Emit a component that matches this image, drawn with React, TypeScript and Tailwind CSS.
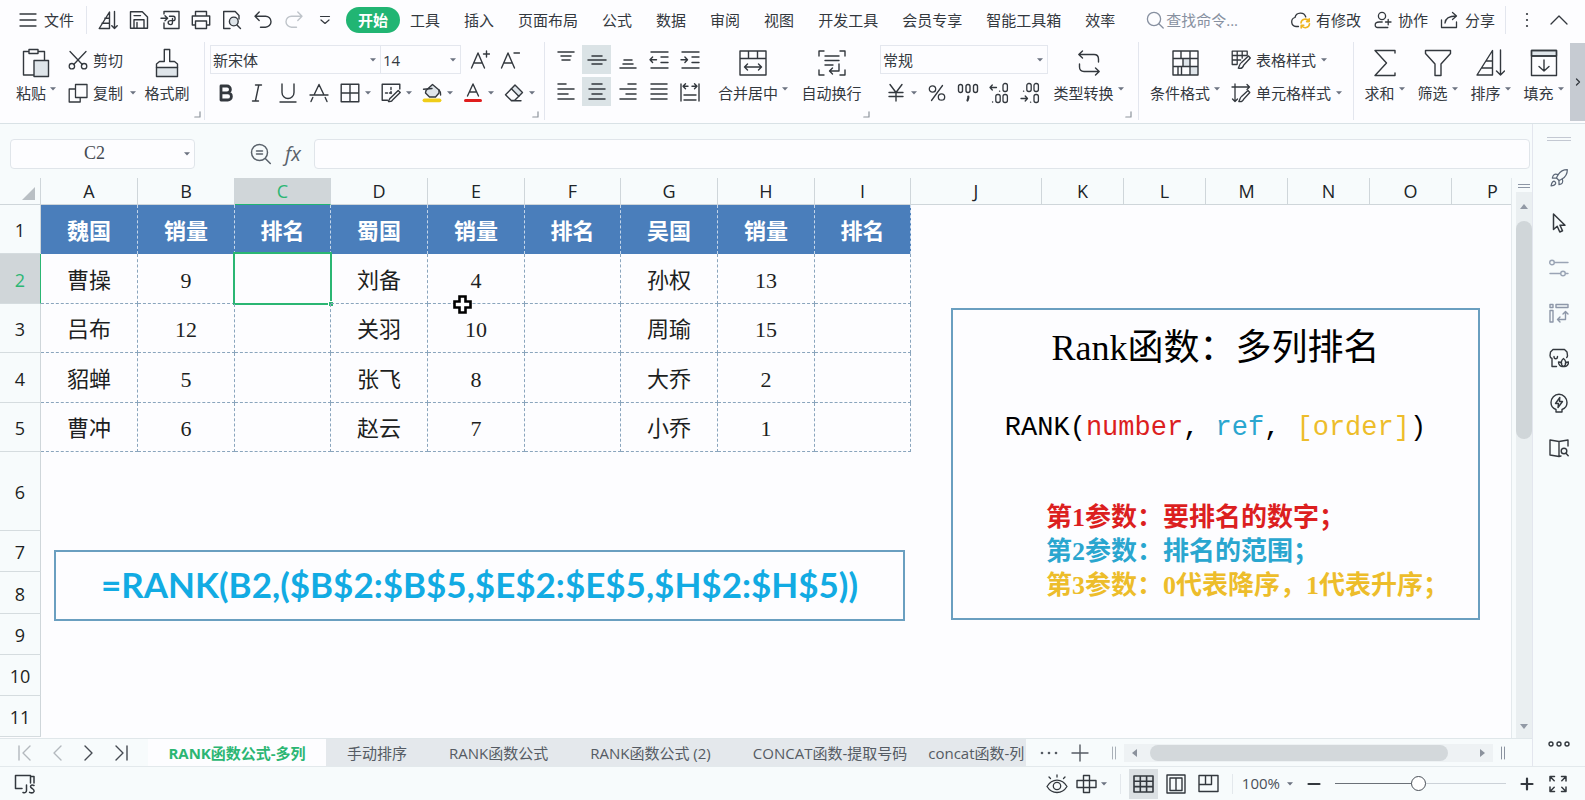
import type { ReactNode } from "react";
import { Rocket } from "lucide-react";

/* ---------- icon helpers ---------- */

function Ic({ w = 20, h = 20, sw = 1.4, cls = "", children }: { w?: number; h?: number; sw?: number; cls?: string; children: ReactNode }) {
  return (
    <svg
      width={w}
      height={h}
      viewBox={`0 0 ${w} ${h}`}
      fill="none"
      stroke="currentColor"
      strokeWidth={sw}
      strokeLinecap="round"
      strokeLinejoin="round"
      aria-hidden="true"
      className={`shrink-0 ${cls}`}
    >
      {children}
    </svg>
  );
}

function Caret({ cls = "" }: { cls?: string }) {
  return (
    <svg width="6" height="4" viewBox="0 0 6 4" aria-hidden="true" className={`shrink-0 text-[#6b7280] ${cls}`}>
      <path d="M0 0.2h6L3 3.6z" fill="currentColor" />
    </svg>
  );
}

const Lines = ({ w = 20, h = 20, rows }: { w?: number; h?: number; rows: [number, number, number][] }) => (
  <Ic w={w} h={h} sw={1.5}>
    {rows.map(([x1, x2, y]) => (
      <path key={`${x1}-${y}`} d={`M${x1} ${y}H${x2}`} />
    ))}
  </Ic>
);

const SortMini = () => (
  <Ic>
    <path d="M11.5 2v16.5H1.2zM4 13.3h7.5M6.8 8.3h4.7M16.5 1.5v17M13.8 15.8l2.7 2.7 2.7-2.7" />
  </Ic>
);
const SaveIcon = () => (
  <Ic>
    <path d="M1.5 1.8h11.8l5.2 5.2v11.2h-17zM5 18V9.8h10V18M5 5.6h6.5M8 12.5v5" />
  </Ic>
);
const ExportIcon = () => (
  <Ic>
    <path d="M4 4V1.5h15v17H4V13M1 8.3h6.5M5 5.8l2.6 2.5L5 10.8M9.5 6.2h3.8c2.4 0 2.4 4.4 0 4.4h-2.6c-3.4 0-3.4 4 0 4 2 0 1.8-2 1.8-4V8.5" />
  </Ic>
);
const PrintIcon = () => (
  <Ic>
    <path d="M4.5 6V1.5h11V6M4.5 15H1.3V6h17.4v9h-3.2M4.5 11h11v7.5h-11z" />
  </Ic>
);
const PreviewIcon = () => (
  <Ic>
    <path d="M8 18.5H1.7v-17h11.5L17 5.4V9" />
    <circle cx="11.8" cy="11.5" r="4.4" fill="#dfe5ea" />
    <path d="M15 15l3.5 3.6" />
  </Ic>
);
const UndoIcon = () => (
  <Ic>
    <path d="M6.2 2L2 6.2l4.2 4.2M2 6.2h10.5a5.4 5.4 0 0 1 0 11H7.5" />
  </Ic>
);
const RedoIcon = () => (
  <Ic>
    <path d="M13.8 2L18 6.2l-4.2 4.2M18 6.2H7.5a5.4 5.4 0 0 0 0 11h5" />
  </Ic>
);

/* ---------- top menu ---------- */

const menus = ["工具", "插入", "页面布局", "公式", "数据", "审阅", "视图", "开发工具", "会员专享", "智能工具箱", "效率"];

function MenuBar() {
  const quick: [string, ReactNode][] = [
    ["排序", <SortMini />],
    ["保存", <SaveIcon />],
    ["输出", <ExportIcon />],
    ["打印", <PrintIcon />],
    ["打印预览", <PreviewIcon />],
    ["撤销", <UndoIcon />],
  ];
  return (
    <nav className="flex h-10 items-center whitespace-nowrap text-[15px] leading-5">
      <button className="ml-[19px] flex items-center gap-[7px]">
        <Ic w={18} h={16} sw={1.3}>
          <path d="M1 2h16M1 8h16M1 14h16" />
        </Ic>
        文件
      </button>
      <span className="ml-3 h-7 w-px bg-[#e3e6ee]" />
      <div className="ml-[5px] flex">
        {quick.map(([label, icon]) => (
          <button key={label} aria-label={label} className="flex w-[31px] justify-center">
            {icon}
          </button>
        ))}
        <button aria-label="恢复" className="flex w-[31px] justify-center text-[#bfc4ca]">
          <RedoIcon />
        </button>
        <button aria-label="更多" className="flex w-[31px] items-center justify-center">
          <Ic w={12} h={12} sw={1.2}>
            <path d="M1.5 2.5h9M2 6l4 3.5L10 6" />
          </Ic>
        </button>
      </div>
      <button className="ml-[6px] h-[26px] w-[54px] rounded-full bg-[#21b573] font-bold text-white">开始</button>
      <div className="ml-[10px] flex gap-6">
        {menus.map((m) => (
          <button key={m}>{m}</button>
        ))}
      </div>
      <label className="ml-[31px] flex items-center gap-[2px]">
        <Ic w={18} h={18} sw={1.3} cls="text-[#8790a0]">
          <circle cx="8" cy="8" r="6.6" />
          <path d="M12.8 12.8l4.4 4.2" />
        </Ic>
        <input aria-label="查找命令" placeholder="查找命令..." className="w-[84px] bg-transparent outline-none placeholder:text-[#8790a0]" />
      </label>
      <div className="ml-auto flex items-center">
        <button className="flex items-center gap-[5px]">
          <Ic w={21} h={18} sw={1.3}>
            <path d="M8.5 15.5H6a4.6 4.6 0 0 1-1-9A5.6 5.6 0 0 1 15.8 6" />
            <g stroke="#efb520" strokeWidth="1.6">
              <path d="M11 12a4.2 4.2 0 0 1 7.8-1.8M19.2 7.8v2.8h-2.6M19.5 12.8a4.2 4.2 0 0 1-7.8 1.8M11.2 17v-2.8h2.6" />
            </g>
          </Ic>
          有修改
        </button>
        <button className="ml-[13px] flex items-center gap-[6px]">
          <Ic w={18} h={18} sw={1.3}>
            <circle cx="8" cy="5" r="3.6" />
            <path d="M11.5 16.5h-8A2.3 2.3 0 0 1 1.2 14c0-2 1.8-3 4-3h3M11.5 11h5.5M14.2 8.3v5.5M13.8 16.5h-2" />
          </Ic>
          协作
        </button>
        <button className="ml-3 flex items-center gap-[6px]">
          <Ic w={19} h={18} sw={1.3}>
            <path d="M1.5 9v7.5h15V11M5 12c.5-5 4-7 11-7M12.5 1.5L16.5 5l-4 3.5" />
          </Ic>
          分享
        </button>
        <span className="ml-[10px] h-7 w-px bg-[#e3e6ee]" />
        <button aria-label="更多选项" className="ml-[13px] w-4">
          <svg width="16" height="18" viewBox="0 0 16 18" fill="currentColor" aria-hidden="true">
            <circle cx="8" cy="3" r="1.1" />
            <circle cx="8" cy="9" r="1.1" />
            <circle cx="8" cy="15" r="1.1" />
          </svg>
        </button>
        <button aria-label="收起功能区" className="mr-4 ml-[14px]">
          <Ic w={20} h={12} sw={1.3}>
            <path d="M2 10l8-8 8 8" />
          </Ic>
        </button>
      </div>
    </nav>
  );
}

/* ---------- ribbon ---------- */

function Big({ label, icon, caret = false, cls }: { label: string; icon: ReactNode; caret?: boolean; cls: string }) {
  return (
    <button className={`flex h-[62px] shrink-0 flex-col items-center ${cls}`}>
      <span className="flex h-9 items-center">{icon}</span>
      <span className="flex h-6 items-center gap-1">
        {label}
        {caret && <Caret cls="-mt-2" />}
      </span>
    </button>
  );
}

function Tool({ label, children, caret = false }: { label: string; children: ReactNode; caret?: boolean }) {
  return (
    <button aria-label={label} className={`flex h-[29px] shrink-0 items-center ${caret ? "w-[41px]" : "w-[31px]"}`}>
      <span className="flex w-[31px] shrink-0 justify-center">{children}</span>
      {caret && <Caret />}
    </button>
  );
}

function AlignTool({ label, children, on = false }: { label: string; children: ReactNode; on?: boolean }) {
  return (
    <button aria-label={label} className={`flex size-[29px] items-center justify-center ${on ? "bg-[#dbe3e6]" : ""}`}>
      {children}
    </button>
  );
}

function Picker({ label, value, cls }: { label: string; value: string; cls: string }) {
  return (
    <div className={`relative flex h-[29px] items-center border border-[#e4e7ee] bg-[#fdfdff] ${cls}`}>
      <select aria-label={label} className="h-full w-full appearance-none bg-transparent pl-[2px] outline-none">
        <option>{value}</option>
      </select>
      <Caret cls="absolute right-1" />
    </div>
  );
}

const Corner = () => (
  <Ic w={7} h={7} sw={1.2} cls="self-end mb-[5px] text-[#8d949c]">
    <path d="M6 .8V6H.8" />
  </Ic>
);
const Rule = () => <span className="mt-[2px] h-[78px] w-px shrink-0 bg-[#e3e6ee]" />;

function Ribbon() {
  return (
    <div className="flex h-[84px] overflow-hidden border-b border-[#d9e2e6] text-[15px] leading-5 whitespace-nowrap">
      <div className="flex pt-[5px] pl-[11px]">
        <Big
          cls="w-[50px]"
          label="粘贴"
          caret
          icon={
            <Ic w={28} h={30}>
              <path d="M12 27H1.5V3.5H7M16 3.5h6.5V12M7 1.5h9v4H7z" />
              <path d="M12 12.5h14.5v16H12z" fill="#dfe5ea" />
            </Ic>
          }
        />
        <div className="ml-[7px] flex w-[72px] flex-col gap-1">
          <button className="flex h-[29px] items-center gap-[5px]">
            <Ic sw={1.3}>
              <path d="M2 1.5l12.3 13M18 1.5L5.7 14.5" />
              <circle cx="3.9" cy="16.2" r="2.7" />
              <circle cx="16.1" cy="16.2" r="2.7" />
            </Ic>
            剪切
          </button>
          <button className="flex h-[29px] items-center gap-[5px]">
            <Ic sw={1.3}>
              <path d="M7.5 1.5h11.5v13H7.5zM7.5 6H1.2v13h11v-4.5" />
            </Ic>
            复制
            <Caret cls="ml-[2px]" />
          </button>
        </div>
        <Big
          cls="w-[54px]"
          label="格式刷"
          icon={
            <Ic w={24} h={30}>
              <path d="M1.5 19.5h21v9h-21z" fill="#dfe5ea" />
              <path d="M1.5 19.5V16l3-2.5h4.8v-12h5.4v12h4.8l3 2.5v3.5" />
            </Ic>
          }
        />
        <Corner />
      </div>
      <span className="w-[3px]" />
      <Rule />
      <div className="ml-[5px] flex pt-[5px]">
        <div className="flex w-[322px] flex-col gap-1">
          <div className="flex">
            <Picker label="字体" value="新宋体" cls="w-[171px]" />
            <Picker label="字号" value="14" cls="w-20 border-l-0" />
            <button aria-label="增大字号" className="ml-[9px] flex w-5 items-center">
              <Ic>
                <path d="M1.5 18L8 3l6.5 15M3.6 13h8.8M16.5 1v6M13.5 4h6" />
              </Ic>
            </button>
            <button aria-label="减小字号" className="ml-[10px] flex w-5 items-center">
              <Ic>
                <path d="M1.5 18L8 3l6.5 15M3.6 13h8.8M14 3h5.5" />
              </Ic>
            </button>
          </div>
          <div className="flex">
            <Tool label="加粗">
              <Ic w={16} h={18} sw={2.8}>
                <path d="M3 2h6a3.4 3.4 0 0 1 0 6.8H3zM3 8.8h6.8a3.6 3.6 0 0 1 0 7.2H3z" />
              </Ic>
            </Tool>
            <Tool label="倾斜">
              <Ic w={12} h={18}>
                <path d="M4.5 1h6M1.5 17h6M7.8 1L4.4 17" />
              </Ic>
            </Tool>
            <Tool label="下划线">
              <Ic w={18} h={20}>
                <path d="M3 1v8.5a6 6 0 0 0 12 0V1M1 19h16" />
              </Ic>
            </Tool>
            <Tool label="删除线">
              <Ic>
                <path d="M1 12h18M5 12L10 1.5 15 12M3.8 14.5L2 18.5M16.2 14.5l1.8 4" />
              </Ic>
            </Tool>
            <Tool label="边框" caret>
              <Ic>
                <path d="M1.2 1.2h17.6v17.6H1.2zM10 1.2v17.6M1.2 10h17.6" />
              </Ic>
            </Tool>
            <Tool label="绘图边框" caret>
              <Ic>
                <path d="M18.8 6V1.2H1.2v16h5.3" />
                <path d="M4.5 10h7M10 4.5v7" strokeDasharray="2 2" />
                <path d="M10 14.5l7.2-7 2 2-7.2 7c-1 2-3 2.3-4.5 2 .7-1.8 1-3.5 2.5-4z" />
              </Ic>
            </Tool>
            <Tool label="填充颜色" caret>
              <Ic>
                <path d="M4 7.5L10.500 1.500l6.500 5.500v3l-3.500 4H7.500L3.500 10z" fill="#dfe5ea" />
                <path d="M1.500 6.200l8.500-.7M17 7c1.500 1.500 1.800 3 1.600 5" />
                <path d="M2.500 17.300h15" stroke="#efcd1a" strokeWidth="3.800" />
              </Ic>
            </Tool>
            <Tool label="字体颜色" caret>
              <Ic>
                <path d="M4.5 13L10 1l5.5 12M6.5 9h7" />
                <path d="M2.5 17.5h15" stroke="#e01d1d" strokeWidth="3" />
              </Ic>
            </Tool>
            <Tool label="清除" caret>
              <Ic>
                <path d="M11 2l7.5 7.5-3.7 3.7-7.4-7.4z" fill="#dfe5ea" />
                <path d="M7.4 5.8L1.5 11.7l5.8 5.8h3.2l4.3-4.3M7.3 17.8H17" />
              </Ic>
            </Tool>
          </div>
        </div>
        <Corner />
      </div>
      <span className="w-[5px]" />
      <Rule />
      <div className="ml-[6px] flex pt-[5px]">
        <div className="flex flex-col gap-[3px]">
          <div className="flex gap-[2px]">
            <AlignTool label="顶端对齐">
              <Lines w={18} rows={[[1, 17, 2], [4, 14, 6], [5, 13, 10]]} />
            </AlignTool>
            <AlignTool label="垂直居中" on>
              <Lines rows={[[5, 15, 6], [1, 19, 10], [5, 15, 14]]} />
            </AlignTool>
            <AlignTool label="底端对齐">
              <Lines w={18} rows={[[5, 13, 10], [4, 14, 14], [1, 17, 18]]} />
            </AlignTool>
            <AlignTool label="减少缩进">
              <Ic>
                <path d="M2 2h17M12 7h7M12 12.5h7M2 18h17M1 9.8h6.5M3.6 7L1 9.8l2.6 2.8" />
              </Ic>
            </AlignTool>
            <AlignTool label="增加缩进">
              <Ic>
                <path d="M2 2h17M12 7h7M12 12.5h7M2 18h17M1 9.8h6.5M4.9 7l2.6 2.8-2.6 2.8" />
              </Ic>
            </AlignTool>
          </div>
          <div className="flex gap-[2px]">
            <AlignTool label="左对齐">
              <Lines w={18} rows={[[1, 9, 2], [1, 17, 7], [1, 11, 12], [1, 17, 17]]} />
            </AlignTool>
            <AlignTool label="水平居中" on>
              <Lines w={18} rows={[[4, 14, 2], [1, 17, 7], [4, 14, 12], [1, 17, 17]]} />
            </AlignTool>
            <AlignTool label="右对齐">
              <Lines w={18} rows={[[9, 17, 2], [1, 17, 7], [7, 17, 12], [1, 17, 17]]} />
            </AlignTool>
            <AlignTool label="两端对齐">
              <Lines w={18} rows={[[1, 17, 2], [1, 17, 7], [1, 17, 12], [1, 17, 17]]} />
            </AlignTool>
            <AlignTool label="分散对齐">
              <Ic>
                <path d="M1 2v17M19 2v17M4 13h12M4 18h12M3 4.2h5M5.5 1.7L3 4.2l2.5 2.5M17 4.2h-5M14.5 1.7L17 4.2l-2.5 2.5" />
              </Ic>
            </AlignTool>
          </div>
        </div>
        <Big
          cls="ml-[11px] w-[76px]"
          label="合并居中"
          caret
          icon={
            <Ic w={28} h={26}>
              <path d="M1 1h26v24H1zM1 8.5h26M9.5 1v7.5M18.5 1v7.5M5.5 17h17M8.5 14l-3 3 3 3M19.5 14l3 3-3 3" />
            </Ic>
          }
        />
        <Big
          cls="ml-[9px] w-[63px]"
          label="自动换行"
          icon={
            <Ic w={28} h={26}>
              <path d="M1 6V1h5M22 1h5v5M27 20v5h-5M6 25H1v-5M7 6h14M7 10.5h14M7 15h8M21 14v7H12M14.5 18L11.5 21l3 3" />
            </Ic>
          }
        />
        <Corner />
      </div>
      <div className="ml-[10px] flex pt-[5px]">
        <div className="flex flex-col gap-1">
          <Picker label="数字格式" value="常规" cls="w-[168px]" />
          <div className="flex">
            <Tool label="货币" caret>
              <Ic w={16} h={20}>
                <path d="M2 1.5l6 8 6-8M8 9.5V18M1 9.5h14M1 13.5h14" />
              </Ic>
            </Tool>
            <Tool label="百分比">
              <Ic w={18} h={18} sw={1.3}>
                <circle cx="4.5" cy="5" r="3.2" />
                <circle cx="13.5" cy="13" r="3.2" />
                <path d="M14.5 1.5l-11 15" />
              </Ic>
            </Tool>
            <Tool label="千位分隔">
              <Ic w={22} h={20} sw={1.4}>
                <rect x="1.5" y="1.5" width="4" height="8" rx="2" />
                <rect x="9" y="1.5" width="4" height="8" rx="2" />
                <rect x="16.5" y="1.5" width="4" height="8" rx="2" />
                <path d="M11.3 13.5v1.5l-.8 2.5" strokeWidth="2.2" />
              </Ic>
            </Tool>
            <Tool label="增加小数位">
              <Ic w={20} h={22} sw={1.3}>
                <path d="M1 5.5h6.5M3.3 3L1 5.5 3.3 8M10.5 9.2h.2M3.5 20h.2" />
                <rect x="14" y="1.5" width="4.4" height="8" rx="2" />
                <rect x="6.8" y="12.5" width="4.4" height="8" rx="2" />
                <rect x="14" y="12.5" width="4.4" height="8" rx="2" />
              </Ic>
            </Tool>
            <Tool label="减少小数位">
              <Ic w={20} h={22} sw={1.3}>
                <path d="M1 16.5h6.5M5.2 14l2.3 2.5L5.2 19M10.500 20.2h.2M3.500 9.200h.2" />
                <rect x="14" y="1.5" width="4.4" height="8" rx="2" />
                <rect x="6.8" y="1.5" width="4.4" height="8" rx="2" />
                <rect x="14" y="12.5" width="4.4" height="8" rx="2" />
              </Ic>
            </Tool>
          </div>
        </div>
        <Big
          cls="ml-1 w-[73px]"
          label="类型转换"
          caret
          icon={
            <Ic w={24} h={28}>
              <path d="M5.5 2L1.8 5.5l3.700 3.500M1.800 5.500H17c3 0 4.500 1.500 4.500 4.500v3M18.500 19l3.700 3.500-3.700 3.500M22 22.500H7c-3 0-4.500-1.500-4.500-4.500v-3" />
            </Ic>
          }
        />
        <Corner />
      </div>
      <span className="w-[6px]" />
      <Rule />
      <div className="flex pt-[5px] pl-2">
        <Big
          cls="w-[76px]"
          label="条件格式"
          caret
          icon={
            <Ic w={27} h={26} sw={1.4}>
              <path d="M11 8.5h7v8h-7zM18 16.5h8V25h-8z" fill="#dfe5ea" stroke="none" />
              <path d="M1 1h25v24H1zM1 8.5h25M1 16.5h25M9 1v7.5M18 1v7.5M11 8.5v8M18 8.5v8M6 16.5V25M9.5 16.5V25M18 16.5V25" />
            </Ic>
          }
        />
        <div className="ml-2 flex w-[122px] flex-col gap-1">
          <button className="flex h-[29px] items-center gap-[5px]">
            <Ic sw={1.3}>
              <path d="M6 14.5H1.2V1.2h15V5M1.2 5.5h15M1.2 10h8.5M6.2 1.2v13M11.2 1.2v7" />
              <path d="M10.5 12.5L17.5 6l1.8 2-6.5 7c-1 3-3.5 3.800-5.500 3.200 1.200-1.700 1-4.500 3.200-5.700z" />
            </Ic>
            表格样式
            <Caret />
          </button>
          <button className="flex h-[29px] items-center gap-[5px]">
            <Ic sw={1.3}>
              <path d="M4 1v17.5M1.500 16l2.500 2.500 2.500-2.500M1 4h17.500M16 1.500L18.500 4 16 6.500" />
              <path d="M10.500 13.500L17 7.500l1.800 2-6 6.500c-1 2.500-3 3-5 2.500 1.200-1.500 1-4 2.700-5z" />
            </Ic>
            单元格样式
            <Caret />
          </button>
        </div>
      </div>
      <Rule />
      <div className="ml-1 flex pt-[5px]">
        <Big
          cls="w-[53px]"
          label="求和"
          caret
          icon={
            <Ic w={24} h={28}>
              <path d="M22 4V1.500H2L13.500 14 2 26.500h20V24" />
            </Ic>
          }
        />
        <Big
          cls="w-[53px]"
          label="筛选"
          caret
          icon={
            <Ic w={28} h={28}>
              <path d="M1.500 1.500h25v3L17 15v11.500h-6V15L1.500 4.500z" />
            </Ic>
          }
        />
        <Big
          cls="w-[53px]"
          label="排序"
          caret
          icon={
            <Ic w={29} h={28}>
              <path d="M16.500 1.500V26H1zM5.500 19h11M10 12h6.500M24.500 1v25M20.500 22l4 4 4-4" />
            </Ic>
          }
        />
        <Big
          cls="w-[53px]"
          label="填充"
          caret
          icon={
            <Ic w={28} h={28}>
              <path d="M1.500 1.500h25V7h-25z" fill="#dfe5ea" />
              <path d="M1.500 1.500h25v25h-25zM1.500 7h25M14 11v11M9 17.500l5 4.500 5-4.500" />
            </Ic>
          }
        />
      </div>
      <button aria-label="向右滚动" className="mt-[3px] ml-auto flex h-[78px] w-[15px] items-center justify-center bg-[#c6cbd2]">
        <Ic w={6} h={8} sw={1.3}>
          <path d="M1.500 1L4.500 4l-3 3" />
        </Ic>
      </button>
    </div>
  );
}

/* ---------- sheet ---------- */

const columns = ["A", "B", "C", "D", "E", "F", "G", "H", "I", "J", "K", "L", "M", "N", "O"];

const rows: { h: string; cells: string[] }[] = [
  { h: "h-[49px]", cells: ["魏国", "销量", "排名", "蜀国", "销量", "排名", "吴国", "销量", "排名"] },
  { h: "h-[50px]", cells: ["曹操", "9", "", "刘备", "4", "", "孙权", "13", ""] },
  { h: "h-[49px]", cells: ["吕布", "12", "", "关羽", "10", "", "周瑜", "15", ""] },
  { h: "h-[50px]", cells: ["貂蝉", "5", "", "张飞", "8", "", "大乔", "2", ""] },
  { h: "h-[49px]", cells: ["曹冲", "6", "", "赵云", "7", "", "小乔", "1", ""] },
  { h: "h-[79px]", cells: [] },
  { h: "h-[41px]", cells: [] },
  { h: "h-[42px]", cells: [] },
  { h: "h-[41px]", cells: [] },
  { h: "h-[41px]", cells: [] },
  { h: "h-[41px]", cells: [] },
];

function Cell({ text, row, col }: { text: string; row: number; col: number }) {
  if (row === 0) {
    return (
      <td className="border-r border-dashed border-r-[#c5d6ea] bg-[#4a7ebb] px-0 pt-1 pb-0 text-center font-bold text-white">{text}</td>
    );
  }
  const active = row === 1 && col === 2;
  return (
    <td className="relative border-r border-b border-dashed border-[#8aa5bd] px-0 pt-1 pb-0 text-center">
      {text}
      {active && (
        <>
          <span className="absolute -inset-[2px] border-2 border-[#2bb673]" />
          <span className="absolute -right-[3px] -bottom-[3px] size-[5px] border-t border-l border-white bg-[#2bb673]" />
        </>
      )}
    </td>
  );
}

function Sheet() {
  return (
    <div className="relative min-w-0 flex-1 overflow-hidden bg-[#fdfdff]">
      <table className="w-full table-fixed border-separate border-spacing-0">
        <colgroup>
          <col className="w-[41px]" />
          {columns.slice(0, 9).map((c, i) => (
            <col key={c} className={i % 3 === 2 ? "w-[96px]" : "w-[97px]"} />
          ))}
          <col className="w-[131px]" />
          {columns.slice(10).map((c) => (
            <col key={c} className="w-[82px]" />
          ))}
          <col />
        </colgroup>
        <thead>
          <tr className="h-[27px] bg-[#f7fbfc] text-[18px] leading-6 text-[#202428]">
            <th aria-label="全选" className="border-r border-b border-[#cfd6da] p-0">
              <svg width="13" height="13" viewBox="0 0 13 13" className="mt-1 ml-[22px]" aria-hidden="true">
                <path d="M13 0v13H0z" fill="#b9bfc4" />
              </svg>
            </th>
            {columns.map((c) => (
              <th
                key={c}
                className={`border-r border-b p-0 font-normal ${c === "C" ? "border-r-[#cfd6da] border-b-[#21b573] bg-[#d0d6d9] text-[#2bb673]" : "border-[#cfd6da]"}`}
              >
                {c}
              </th>
            ))}
            <th className="border-b border-[#cfd6da] p-0 pl-[22px] font-normal">P</th>
          </tr>
        </thead>
        <tbody className="font-['Liberation_Serif','Noto_Sans_CJK_SC',serif] text-[22px] leading-6 text-[#1d1f22]">
          {rows.map((r, ri) => (
            <tr key={ri} className={r.h}>
              <th
                className={`border-r border-b px-0 pt-[2px] pb-0 font-['Open_Sans','Noto_Sans_CJK_SC',sans-serif] text-[18px] font-normal ${
                  ri === 1 ? "border-r-[#2bb673] border-b-[#d5dcdf] bg-[#d0d6d9] text-[#2bb673]" : "border-r-[#cfd6da] border-b-[#d5dcdf] bg-[#f7fbfc]"
                }`}
              >
                {ri + 1}
              </th>
              {r.cells.map((t, ci) => (
                <Cell key={ci} text={t} row={ri} col={ci} />
              ))}
            </tr>
          ))}
        </tbody>
      </table>

      {/* floating text boxes on the sheet */}
      <div className="absolute top-[372px] left-[54px] flex h-[71px] w-[851px] items-center justify-center border-2 border-[#6a9fc0] pb-1 font-['Lato',sans-serif] text-[35px] leading-10 font-bold whitespace-nowrap text-[#12abe3]">
        =RANK(B2,($B$2:$B$5,$E$2:$E$5,$H$2:$H$5))
      </div>
      <section className="absolute top-[130px] left-[951px] h-[312px] w-[529px] border-2 border-[#6a9fc0] font-['Liberation_Serif','Noto_Sans_CJK_SC',serif] whitespace-nowrap">
        <h2 className="mt-4 text-center text-[36px] leading-[44px] text-black">Rank函数：多列排名</h2>
        <p className="mt-9 text-center font-['Liberation_Mono',monospace] text-[27px] leading-[44px] text-black">
          RANK(<span className="text-[#dc1f1f]">number</span>, <span className="text-[#2aa6cf]">ref</span>,{" "}
          <span className="text-[#edbd2b]">[order]</span>)
        </p>
        <div className="mt-[51px] ml-[93px] text-[26px] leading-[34px] font-bold">
          <p className="text-[#dc1f1f]">第1参数：要排名的数字；</p>
          <p className="text-[#2aa6cf]">第2参数：排名的范围；</p>
          <p className="text-[#edbd2b]">第3参数：0代表降序，1代表升序；</p>
        </div>
      </section>

      {/* mouse pointer */}
      <svg width="21" height="21" viewBox="0 0 21 21" className="absolute top-[116px] left-[452px]" aria-hidden="true">
        <path d="M7.500 2.500h6v5h5v6h-5v5h-6v-5h-5v-6h5z" fill="#fff" stroke="#000" strokeWidth="2.600" />
      </svg>
    </div>
  );
}

function FormulaBar() {
  return (
    <div className="flex h-[54px] items-center pt-[5px] pl-[10px]">
      <div className="relative flex h-[30px] w-[185px] items-center rounded-sm border border-[#e0e5ea] bg-[#fdfdff]">
        <input
          aria-label="名称框"
          defaultValue="C2"
          className="w-full bg-transparent pr-4 text-center font-['Liberation_Serif',serif] text-[18px] text-[#454b52] outline-none"
        />
        <Caret cls="absolute right-1" />
      </div>
      <button aria-label="浏览公式结果" className="ml-[55px] text-[#5a626b]">
        <Ic w={22} h={22} sw={1.5}>
          <circle cx="9.500" cy="9.500" r="8" />
          <path d="M15.300 15.500l5 5M6.500 8h6M6.500 11h6" />
        </Ic>
      </button>
      <button aria-label="插入函数" className="ml-[10px] w-[22px] font-['Open_Sans',sans-serif] text-[20px] leading-6 text-[#5a626b] italic">
        fx
      </button>
      <input aria-label="编辑栏" className="mr-[2px] ml-[10px] h-[30px] min-w-0 flex-1 rounded-sm border border-[#e0e5ea] bg-[#fdfdff] px-2 outline-none" />
    </div>
  );
}

function VScroll() {
  return (
    <div className="flex w-[21px] shrink-0 flex-col items-center border-l border-[#e3e9ec] pl-[3px]">
      <Ic w={12} h={14} sw={1} cls="text-[#8d96a5]">
        <path d="M0 6.500h12M0 9.500h12" />
      </Ic>
      <div className="flex w-4 flex-1 flex-col items-center bg-[#eaeff1]">
        <svg width="8" height="5" viewBox="0 0 8 5" className="mt-[12px]" aria-hidden="true">
          <path d="M4 0l4 5H0z" fill="#9199a5" />
        </svg>
        <div className="mt-3 h-[218px] w-4 rounded-lg bg-[#d0d6d9]" />
        <svg width="8" height="5" viewBox="0 0 8 5" className="mt-auto mb-[9px]" aria-hidden="true">
          <path d="M4 5l4-5H0z" fill="#9199a5" />
        </svg>
      </div>
    </div>
  );
}

function SideBar() {
  return (
    <aside className="flex w-[53px] shrink-0 flex-col items-center border-l border-[#e3e6ee]">
      <Ic w={24} h={6} sw={1} cls="mt-3 text-[#c3c8d2]">
        <path d="M0 1.500h24M0 4.500h24" />
      </Ic>
      <div className="mt-[26px] flex flex-col items-center gap-[25px]">
        <button aria-label="快捷工具" className="text-[#5d6878]">
          <Rocket size={20} strokeWidth={1.500} />
        </button>
        <button aria-label="选择">
          <Ic sw={1.500}>
            <path d="M4.500 1v15.500l3.700-3.200 2.600 5.700 2.700-1.200-2.500-5.500h5z" />
          </Ic>
        </button>
        <button aria-label="属性" className="text-[#9aa4b5]">
          <Ic>
            <circle cx="3" cy="4.500" r="2.300" />
            <circle cx="14" cy="15.500" r="2.300" />
            <path d="M5.500 4.500H19M1 15.500h10.500M16.500 15.500H19" />
          </Ic>
        </button>
        <button aria-label="分析" className="text-[#8d97a8]">
          <Ic>
            <path d="M1 1.500h3v3H1zM7 1.500h12v3H7zM1 7.500h3V19H1zM8.500 16.500h8v-8M14 11l2.500-2.500L19 11M11 14l-2.500 2.500L11 19" />
          </Ic>
        </button>
        <button aria-label="智能美化">
          <Ic>
            <path d="M7.500 18.500H3V10.500C1.500 10 1 9 1 7.500l.5-3.500 2.500-2.500h11.500l2.500 2.500.5 3.500c0 1-.2 1.500-.8 2M5 8.500c0 3 3.500 3 3.500 0" />
            <path d="M14.500 18.500c-3.500-2-2.500-6 0-8 2.500 2 3.500 6 0 8zM14.500 18.500c-3 .5-5-1.500-5-4.500 1.500 0 2.500.5 3.200 1.200M14.500 18.500c3 .5 5-1.500 5-4.500-1.500 0-2.500.5-3.200 1.200" />
          </Ic>
        </button>
        <button aria-label="推荐">
          <Ic>
            <path d="M7 16.500V19h6v-2.500c3-1 5-3.600 5-7A8 8.200 0 0 0 2 9.500c0 3.400 2 6 5 7z" />
            <path d="M10.800 4.500L6.500 10.500h3l-.5 4 4.500-6h-3z" />
          </Ic>
        </button>
        <button aria-label="帮助">
          <Ic>
            <path d="M10 3.500v14M10 3.500L1 2v15l9 1.500 2-.5M10 3.500L19 2v6" />
            <circle cx="15" cy="13" r="2.800" />
            <path d="M17 15.200l2.200 2.600" />
          </Ic>
        </button>
      </div>
      <button aria-label="更多面板" className="mt-auto mb-[18px]">
        <Ic w={22} h={8} sw={1.400}>
          <circle cx="3" cy="4" r="2" />
          <circle cx="11" cy="4" r="2" />
          <circle cx="19" cy="4" r="2" />
        </Ic>
      </button>
    </aside>
  );
}

/* ---------- sheet tabs and status bar ---------- */

function SheetTabs() {
  const nav: [string, string, string][] = [
    ["第一张", "M2 1v14M13 1L6 8l7 7", "text-[#b3b8be]"],
    ["上一张", "M12 1L5 8l7 7", "text-[#b3b8be]"],
    ["下一张", "M4 1l7 7-7 7", "text-[#454a52]"],
    ["最后一张", "M3 1l7 7-7 7M14 1v14", "text-[#454a52]"],
  ];
  return (
    <div className="flex h-[28px] items-center border-t border-[#e0e7ea] pr-[26px] text-[15px] leading-6 whitespace-nowrap text-[#555b63]">
      <div className="ml-[9px] flex w-[139px]">
        {nav.map(([label, d, color]) => (
          <button key={label} aria-label={label} className={`flex w-8 justify-center ${color}`}>
            <Ic w={16} h={16}>
              <path d={d} />
            </Ic>
          </button>
        ))}
      </div>
      <div className="flex h-full w-[878px] shrink-0 overflow-hidden bg-[#e4e8ec]">
        <button className="w-[178px] shrink-0 bg-[#fdfdff] font-bold text-[#2bb673]">RANK函数公式-多列</button>
        <button className="shrink-0 px-[21px]">手动排序</button>
        <button className="shrink-0 px-[21px]">RANK函数公式</button>
        <button className="shrink-0 px-[21px]">RANK函数公式 (2)</button>
        <button className="shrink-0 px-[21px]">CONCAT函数-提取号码</button>
        <button className="shrink-0">concat函数-列</button>
      </div>
      <button aria-label="全部工作表" className="ml-[14px]">
        <svg width="18" height="6" viewBox="0 0 18 6" fill="currentColor" aria-hidden="true">
          <circle cx="2" cy="3" r="1.300" />
          <circle cx="9" cy="3" r="1.300" />
          <circle cx="16" cy="3" r="1.300" />
        </svg>
      </button>
      <button aria-label="新建工作表" className="ml-[13px]">
        <Ic w={18} h={18}>
          <path d="M9 1v16M1 9h16" />
        </Ic>
      </button>
      <Ic w={6} h={14} sw={1} cls="ml-[22px] text-[#a9b0b8]">
        <path d="M1.500 1v12M4.500 1v12" />
      </Ic>
      <div className="ml-[7px] flex h-[18px] flex-1 items-center bg-[#eef2f4] px-2">
        <svg width="5" height="8" viewBox="0 0 5 8" aria-hidden="true">
          <path d="M5 0v8L0 4z" fill="#8b929c" />
        </svg>
        <div className="mr-8 ml-[13px] h-4 flex-1 rounded-full bg-[#d3d8db]" />
        <svg width="5" height="8" viewBox="0 0 5 8" aria-hidden="true">
          <path d="M0 0v8l5-4z" fill="#8b929c" />
        </svg>
      </div>
      <Ic w={6} h={14} sw={1} cls="ml-[7px] text-[#8b93a0]">
        <path d="M1.500 1v12M4.500 1v12" />
      </Ic>
    </div>
  );
}

function StatusBar() {
  return (
    <footer className="flex h-[34px] items-center border-t border-[#e3e9ec] pr-[17px] text-[15px]">
      <button aria-label="宏编辑器" className="ml-[14px]">
        <Ic w={22} h={20} sw={1.500}>
          <path d="M8 14.500H1.500V1.500h15M16.500 9V2.500h3.500V9M12.500 11v5.500c0 2-1.500 2.500-3.500 2M20 11.500c-3-1.500-4.500 1-2.500 2.500 2 1.300 3 1.500 2.500 3.500-1 2-3.500 1.300-4.500.8" />
        </Ic>
      </button>
      <div className="ml-auto flex items-center">
        <button aria-label="护眼模式">
          <Ic w={22} h={20} sw={1.300}>
            <path d="M1 12.500c5-8.500 15-8.500 20 0-5 8-15 8-20 0zM11 3V1M4.500 4.500L3 3M17.500 4.500L19 3" />
            <circle cx="11" cy="12" r="3.700" />
          </Ic>
        </button>
        <button aria-label="阅读模式" className="ml-2 flex items-center gap-[4px]">
          <Ic w={21} h={20} sw={1.400}>
            <path d="M7.500 1.500h6v17h-6zM1 6.500h19v7H1zM7.500 6.500v7M13.500 6.500v7" />
          </Ic>
          <Caret />
        </button>
        <span className="ml-[13px] h-5 w-px bg-[#e3e8ec]" />
        <button aria-label="普通视图" className="ml-[8px] flex h-[30px] w-[29px] items-center justify-center bg-[#dbe0e3]">
          <Ic w={21} h={18} sw={1.600}>
            <path d="M1 1h19v16H1zM1 6.300h19M1 11.600h19M7.300 1v16M13.600 1v16" />
          </Ic>
        </button>
        <button aria-label="分页预览" className="ml-2">
          <Ic sw={1.400}>
            <path d="M1 1h18v18H1zM4 4h12v12.500H4zM10 4v12.500" />
          </Ic>
        </button>
        <button aria-label="页面布局视图" className="ml-3">
          <Ic w={21} h={19} sw={1.400}>
            <path d="M1 1.500h19v16H1zM1 10.500h12.500v-9M7.500 1.500v9" />
          </Ic>
        </button>
        <span className="ml-[13px] h-5 w-px bg-[#e3e8ec]" />
        <button className="ml-[9px] flex items-center gap-[7px] text-[#4a5058]">
          100%
          <Caret />
        </button>
        <button aria-label="缩小" className="ml-[14px]">
          <Ic w={14} h={14} sw={2.200}>
            <path d="M1.500 7h11" />
          </Ic>
        </button>
        <input
          type="range"
          aria-label="显示比例"
          min={10}
          max={190}
          defaultValue={98}
          className="ml-[14px] h-4 w-[171px] appearance-none bg-transparent [&::-webkit-slider-runnable-track]:h-px [&::-webkit-slider-runnable-track]:bg-linear-to-r [&::-webkit-slider-runnable-track]:from-[#6b7178] [&::-webkit-slider-runnable-track]:from-50% [&::-webkit-slider-runnable-track]:to-[#ccd2d8] [&::-webkit-slider-runnable-track]:to-50% [&::-webkit-slider-thumb]:-mt-[7px] [&::-webkit-slider-thumb]:size-[15px] [&::-webkit-slider-thumb]:appearance-none [&::-webkit-slider-thumb]:rounded-full [&::-webkit-slider-thumb]:border [&::-webkit-slider-thumb]:border-[#4a5058] [&::-webkit-slider-thumb]:bg-white"
        />
        <button aria-label="放大" className="ml-[14px]">
          <Ic w={14} h={14} sw={2.200}>
            <path d="M1.500 7h11M7 1.500v11" />
          </Ic>
        </button>
        <button aria-label="全屏" className="ml-[14px]">
          <Ic w={20} h={18} sw={1.500}>
            <path d="M2 6V1.500h4.500M2 1.500l4.200 4.200M13.500 1.500H18V6M18 1.500l-4.200 4.200M2 12v4.500h4.500M2 16.500l4.200-4.200M18 12v4.500h-4.500M18 16.500l-4.200-4.200" />
          </Ic>
        </button>
      </div>
    </footer>
  );
}

export default function App() {
  return (
    <div className="flex min-h-screen flex-col overflow-hidden bg-[#f7fbfc] font-['Open_Sans','Noto_Sans_CJK_SC',sans-serif] text-[#33383e]">
      <header className="bg-[#fdfdff]">
        <MenuBar />
        <Ribbon />
      </header>
      <div className="flex flex-1">
        <main className="flex min-w-0 flex-1 flex-col">
          <FormulaBar />
          <div className="flex flex-1">
            <Sheet />
            <VScroll />
          </div>
          <SheetTabs />
        </main>
        <SideBar />
      </div>
      <StatusBar />
    </div>
  );
}
